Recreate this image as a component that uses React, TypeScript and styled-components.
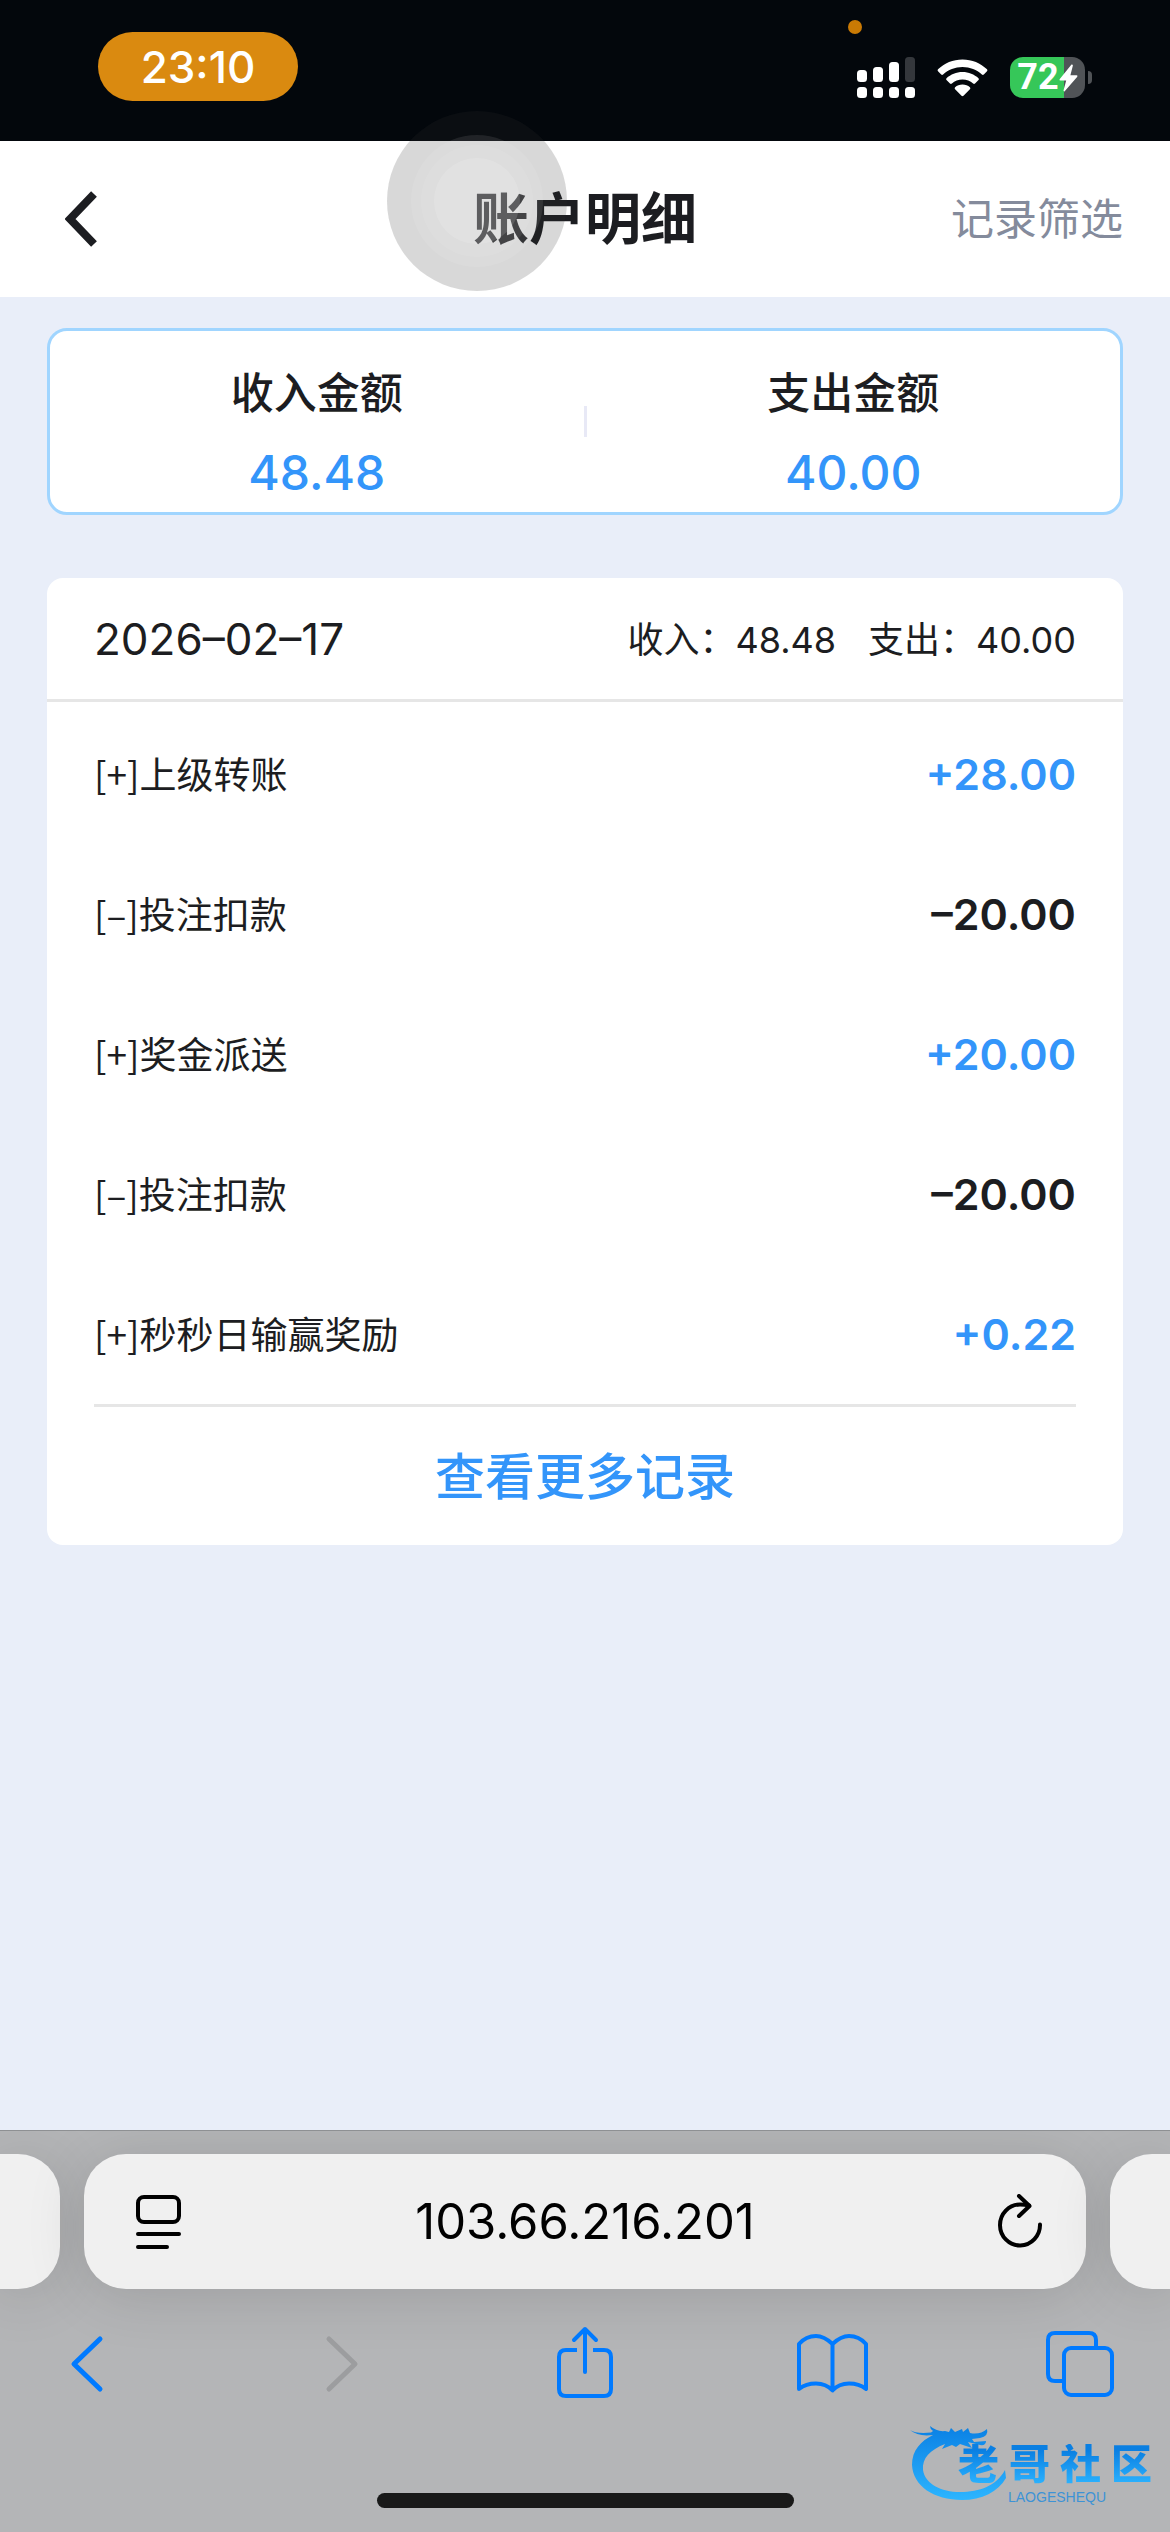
import React from "react";
import styled, { createGlobalStyle } from "styled-components";

const color = {
  ink: "#1c1d21",
  blue: "#3395fa",
  iosBlue: "#007aff",
  page: "#e9eef9",
  line: "#e6e6e6",
  chrome: "#b4b5b7",
};

const GlobalStyle = createGlobalStyle`
  * { box-sizing: border-box; }
  body { margin: 0; background: ${color.page}; }
  h1, dl, dd, ul, p { margin: 0; padding: 0; }
  ul { list-style: none; }
  button, input {
    margin: 0; padding: 0; border: 0; background: none;
    font: inherit; color: inherit;
  }
  svg { display: block; }
`;

const Screen = styled.div`
  position: relative;
  display: flex;
  flex-direction: column;
  min-height: 100vh;
  overflow: hidden;
  background: ${color.page};
  color: ${color.ink};
  font-family: Inter, "Noto Sans CJK SC", sans-serif;
`;

const StatusBar = styled.div`
  position: relative;
  display: flex;
  align-items: flex-start;
  justify-content: space-between;
  height: 141px;
  padding: 32px 78px 0 98px;
  background: #03070c;
`;

const TimePill = styled.time`
  display: flex;
  align-items: center;
  justify-content: center;
  width: 200px;
  height: 69px;
  border-radius: 35px;
  background: #da8a10;
  color: #fff;
  font-size: 44px;
  font-weight: 500;
`;

const StatusIcons = styled.div`
  display: flex;
  align-items: center;
  gap: 22px;
  padding-top: 25px;
`;

const MicDot = styled.span`
  position: absolute;
  top: 20px;
  right: 308px;
  width: 14px;
  height: 14px;
  border-radius: 50%;
  background: #ca7a04;
`;

const BatteryGroup = styled.div`
  display: flex;
  align-items: center;
  gap: 3px;
`;

const BatteryBody = styled.div`
  display: flex;
  align-items: center;
  justify-content: center;
  width: 75px;
  height: 41px;
  border-radius: 13px;
  background: linear-gradient(90deg, #36c759 72%, #505357 72%);
  color: #fff;
  font-family: Roboto, sans-serif;
  font-size: 36px;
  font-weight: 700;
  line-height: 41px;
`;

const BatteryCap = styled.span`
  width: 4px;
  height: 13px;
  border-radius: 0 4px 4px 0;
  background: #505357;
`;

const Header = styled.header`
  display: grid;
  grid-template-columns: 1fr auto 1fr;
  align-items: center;
  height: 156px;
  padding: 0 47px;
  background: #fff;
`;

const BackButton = styled.button`
  justify-self: start;
  padding: 12px 18px;
`;

const Title = styled.h1`
  font-size: 56px;
  font-weight: 700;
  line-height: 80px;
`;

const FilterButton = styled.button`
  justify-self: end;
  color: #848b9c;
  font-size: 43px;
  line-height: 64px;
`;

const Content = styled.main`
  display: flex;
  flex: 1;
  flex-direction: column;
  gap: 63px;
  padding: 31px 47px;
`;

const Summary = styled.dl`
  display: flex;
  align-items: center;
  border: 3px solid #a0d5ff;
  border-radius: 20px;
  background: #fff;
`;

const SummaryItem = styled.div`
  display: flex;
  flex: 1;
  flex-direction: column;
  align-items: center;
  gap: 20px;
  padding: 32px 0 9px;
  line-height: 60px;
`;

const SummaryLabel = styled.dt`
  font-size: 43px;
  font-weight: 500;
`;

const SummaryValue = styled.dd`
  color: ${color.blue};
  font-size: 48px;
  font-weight: 500;
`;

const SummaryDivider = styled.div`
  width: 3px;
  height: 31px;
  background: #e8e9f6;
`;

const Card = styled.section`
  border-radius: 16px;
  background: #fff;
`;

const DayHeader = styled.div`
  display: flex;
  align-items: center;
  justify-content: space-between;
  height: 124px;
  padding: 0 47px;
  border-bottom: 3px solid ${color.line};
`;

const DayDate = styled.time`
  font-size: 44px;
`;

const DayTotals = styled.div`
  display: flex;
  gap: 32px;
  padding-bottom: 4px;
  font-size: 36px;
`;

const RecordList = styled.ul`
  margin: 0 47px;
  padding-top: 2px;
  border-bottom: 3px solid ${color.line};
`;

const Record = styled.li`
  display: flex;
  align-items: center;
  justify-content: space-between;
  height: 140px;
`;

const RecordName = styled.span`
  padding-bottom: 2px;
  font-family: "Noto Sans CJK SC", sans-serif;
  font-size: 37px;
`;

const Amount = styled.span<{ $income: boolean }>`
  color: ${(p) => (p.$income ? color.blue : color.ink)};
  font-size: 43px;
  font-weight: 600;
`;

const MoreButton = styled.button`
  display: block;
  width: 100%;
  height: 138px;
  padding-bottom: 6px;
  color: ${color.blue};
  font-size: 50px;
  font-weight: 500;
`;

const BrowserBar = styled.footer`
  position: relative;
  border-top: 1px solid #8e9093;
  background: ${color.chrome};
  overflow: hidden;
`;

const AddressStrip = styled.div`
  display: flex;
  gap: 24px;
  padding-top: 23px;
`;

const pill = `
  height: 135px;
  background: #f0f0f0;
  box-shadow: 0 6px 60px rgba(0, 0, 0, 0.13);
`;

const SideTab = styled.div<{ $side: "left" | "right" }>`
  ${pill}
  flex: none;
  width: 60px;
  border-radius: ${(p) => (p.$side === "left" ? "0 42px 42px 0" : "42px 0 0 42px")};
`;

const AddressBar = styled.div`
  ${pill}
  display: flex;
  flex: 1;
  align-items: center;
  min-width: 0;
  border-radius: 42px;
  color: #000;
`;

const AddressButton = styled.button`
  display: flex;
  flex: none;
  justify-content: center;
  width: 140px;
`;

const AddressInput = styled.input`
  flex: 1;
  min-width: 0;
  height: 80px;
  outline: none;
  font-size: 49px;
  text-align: center;
`;

const Toolbar = styled.nav`
  display: flex;
  justify-content: space-between;
  padding: 32px 50px 0 46px;
  color: ${color.iosBlue};
`;

const ToolButton = styled.button`
  width: 80px;
  height: 84px;

  &:disabled {
    color: #9c9d9f;
  }
`;

const HomeIndicator = styled.div`
  width: 417px;
  height: 15px;
  margin: 88px auto 24px;
  border-radius: 8px;
  background: #191919;
`;

const TouchButton = styled.button`
  position: absolute;
  top: 111px;
  left: calc(50% - 198px);
  width: 180px;
  height: 180px;
`;

const Watermark = styled.div`
  position: absolute;
  right: 18px;
  bottom: 24px;
  width: 244px;
  height: 86px;
`;

const WatermarkRing = styled.svg`
  position: absolute;
  inset: 0;
`;

const WatermarkText = styled.div`
  position: absolute;
  top: 22px;
  right: 0;
  display: flex;
  gap: 10px;
  background: linear-gradient(#0a7fe2 15%, #2bb2fe 95%);
  background-clip: text;
  color: transparent;
  font-family: "Liberation Sans", "Noto Sans CJK SC", sans-serif;
  font-size: 41px;
  font-weight: 900;
  line-height: 42px;
`;

const WatermarkSub = styled.div`
  position: absolute;
  top: 68px;
  left: 100px;
  color: #3d93d6;
  font-family: "Liberation Sans", sans-serif;
  font-size: 14px;
  line-height: 14px;
`;

function SignalIcon() {
  return (
    <svg width="58" height="41" viewBox="0 0 58 41" fill="#fff" aria-hidden="true">
      <rect x="0" y="13" width="10" height="12" rx="3.5" />
      <rect x="16" y="10" width="10" height="15" rx="3.5" />
      <rect x="32" y="5" width="10" height="20" rx="3.5" />
      <rect x="48" y="0" width="10" height="25" rx="3.5" fill="#34373c" />
      {[0, 16, 32, 48].map((x) => (
        <rect key={x} x={x} y="30" width="10" height="11" rx="3.5" />
      ))}
    </svg>
  );
}

function WifiIcon() {
  return (
    <svg width="51" height="38" viewBox="0 0 51 38" fill="#fff" aria-hidden="true">
      <path d="M25.5 0.5C35 .5 43.6 4.2 50 10.300Q50.900 11.200 50 12.200L46.800 15.500Q45.900 16.400 44.900 15.500C39.800 10.800 33 8 25.500 8S11.200 10.800 6.100 15.500Q5.100 16.400 4.200 15.500L1 12.200Q.1 11.200 1 10.300C7.400 4.200 16 .5 25.500 .5Z" />
      <path d="M25.5 13C31.700 13 37.300 15.400 41.500 19.200Q42.400 20.100 41.500 21L38 24.500Q37.100 25.400 36.100 24.500C33.300 22 29.600 20.500 25.500 20.500S17.700 22 14.900 24.500Q13.900 25.400 13 24.500L9.500 21Q8.600 20.100 9.500 19.200C13.700 15.400 19.300 13 25.500 13Z" />
      <path d="M25.500 25.500C28.400 25.500 31 26.500 32.900 28.200Q33.900 29.200 32.900 30.200L26.500 36.800Q25.500 37.600 24.500 36.800L18.100 30.200Q17.100 29.200 18.100 28.200C20 26.500 22.600 25.500 25.500 25.500Z" />
    </svg>
  );
}

function BoltIcon() {
  return (
    <svg width="19" height="28" viewBox="0 0 19 28" fill="#fff" aria-hidden="true">
      <path d="M12.500.500 .6 15.200Q0 16.500 1.400 16.500H7.200L4.500 26.600Q4.700 27.800 5.700 27.200L18.300 12.700Q18.800 11.300 17.500 11.300H11.400L13.900 1.400Q13.700.1 12.500.500Z" />
    </svg>
  );
}

type LineIconProps = {
  width: number;
  height: number;
  box?: string;
  stroke?: number;
  children: React.ReactNode;
};

function LineIcon({ width, height, box, stroke = 4, children }: LineIconProps) {
  return (
    <svg
      width={width}
      height={height}
      viewBox={box ?? `0 0 ${width} ${height}`}
      fill="none"
      stroke="currentColor"
      strokeWidth={stroke}
      strokeLinecap="round"
      strokeLinejoin="round"
      aria-hidden="true"
    >
      {children}
    </svg>
  );
}

const summary = [
  { label: "收入金额", value: "48.48" },
  { label: "支出金额", value: "40.00" },
];

const records = [
  { name: "[+]上级转账", amount: "+28.00" },
  { name: "[–]投注扣款", amount: "–20.00" },
  { name: "[+]奖金派送", amount: "+20.00" },
  { name: "[–]投注扣款", amount: "–20.00" },
  { name: "[+]秒秒日输赢奖励", amount: "+0.22" },
];

export default function App() {
  return (
    <Screen lang="zh-CN">
      <GlobalStyle />

      <StatusBar>
        <TimePill>23:10</TimePill>
        <MicDot />
        <StatusIcons>
          <SignalIcon />
          <WifiIcon />
          <BatteryGroup>
            <BatteryBody>
              72
              <BoltIcon />
            </BatteryBody>
            <BatteryCap />
          </BatteryGroup>
        </StatusIcons>
      </StatusBar>

      <Header>
        <BackButton aria-label="返回">
          <svg width="32" height="56" viewBox="0 0 32 56" fill="none" stroke={color.ink} strokeWidth="8" aria-hidden="true">
            <path d="M29 3 5 28 29 53" />
          </svg>
        </BackButton>
        <Title>账户明细</Title>
        <FilterButton>记录筛选</FilterButton>
      </Header>

      <Content>
        <Summary>
          <SummaryItem>
            <SummaryLabel>{summary[0].label}</SummaryLabel>
            <SummaryValue>{summary[0].value}</SummaryValue>
          </SummaryItem>
          <SummaryDivider />
          <SummaryItem>
            <SummaryLabel>{summary[1].label}</SummaryLabel>
            <SummaryValue>{summary[1].value}</SummaryValue>
          </SummaryItem>
        </Summary>

        <Card>
          <DayHeader>
            <DayDate dateTime="2026-02-17">2026–02–17</DayDate>
            <DayTotals>
              <span>收入：48.48</span>
              <span>支出：40.00</span>
            </DayTotals>
          </DayHeader>
          <RecordList>
            {records.map((r, i) => (
              <Record key={i}>
                <RecordName>{r.name}</RecordName>
                <Amount $income={r.amount.startsWith("+")}>{r.amount}</Amount>
              </Record>
            ))}
          </RecordList>
          <MoreButton>查看更多记录</MoreButton>
        </Card>
      </Content>

      <BrowserBar>
        <AddressStrip>
          <SideTab $side="left" />
          <AddressBar>
            <AddressButton aria-label="页面菜单">
              <LineIcon width={56} height={56} box="-10 0 56 56">
                <rect x="2" y="3" width="41" height="25" rx="6" />
                <path d="M2 40H43M2 53H31" />
              </LineIcon>
            </AddressButton>
            <AddressInput aria-label="网址" defaultValue="103.66.216.201" />
            <AddressButton aria-label="重新载入">
              <LineIcon width={56} height={56} box="-10 3 56 56">
                <path d="M42 33.500A20 20.500 0 1 1 22 13.500Q27 13.500 31 14.500" />
                <path d="M21 5 31.500 15 21 25" />
              </LineIcon>
            </AddressButton>
          </AddressBar>
          <SideTab $side="right" />
        </AddressStrip>

        <Toolbar>
          <ToolButton aria-label="后退">
            <LineIcon width={80} height={84} stroke={5}>
              <path d="M54 18 28 43 54 68" />
            </LineIcon>
          </ToolButton>
          <ToolButton aria-label="前进" disabled>
            <LineIcon width={80} height={84} stroke={5}>
              <path d="M34 18 60 43 34 68" />
            </LineIcon>
          </ToolButton>
          <ToolButton aria-label="分享">
            <LineIcon width={80} height={84}>
              <path d="M34 29H23Q16 29 16 36V68Q16 75 23 75H61Q68 75 68 68V36Q68 29 61 29H50" strokeLinecap="butt" />
              <path d="M42 51V8M31 19 42 8 53 19" />
            </LineIcon>
          </ToolButton>
          <ToolButton aria-label="书签">
            <LineIcon width={80} height={84}>
              <path d="M40.500 23Q32 15 24 15 14 15 7 23V68Q14 62.500 24 62.500 34 62.500 40.500 69.500 47 62.500 57 62.500 67 62.500 74 68V23Q67 15 57 15 49 15 40.500 23V69" />
            </LineIcon>
          </ToolButton>
          <ToolButton aria-label="标签页">
            <LineIcon width={80} height={84}>
              <rect x="24" y="27" width="48" height="47" rx="7" />
              <path d="M24 60H15Q8 60 8 53V19Q8 12 15 12H49Q56 12 56 19V27" strokeLinecap="butt" />
            </LineIcon>
          </ToolButton>
        </Toolbar>

        <HomeIndicator />

        <Watermark>
          <WatermarkRing width="244" height="86" viewBox="0 0 244 86" aria-hidden="true">
            <defs>
              <linearGradient id="ring" x1="0" y1="0" x2="0" y2="1">
                <stop offset="0" stopColor="#0a80e4" />
                <stop offset="1" stopColor="#2db5ff" />
              </linearGradient>
            </defs>
            <path
              fill="url(#ring)"
              d="M2 8Q8 12 23 10.500L25 9Q22 7 22 4Q29 10 37 9L41 10 43 6 47 10 54 7 55 10 60 6 62 11Q72 13 79 7Q81 14 72 16L64 17 66 20 78 19Q78 24 72 23L60 20 64 26 52 22 48 25 44 23 34 27 37 22C22 28 14 36 15 48C17 62 33 70 52 70C72 70 88 64 97 48L98 56C90 70 74 78 54 78C26 78 5 64 4 43C4 28 13 19 25 13Q10 15 2 8Z"
            />
          </WatermarkRing>
          <WatermarkText>
            <span>老</span>
            <span>哥</span>
            <span>社</span>
            <span>区</span>
          </WatermarkText>
          <WatermarkSub>LAOGESHEQU</WatermarkSub>
        </Watermark>
      </BrowserBar>

      <TouchButton aria-label="辅助触控">
        <svg width="180" height="180" viewBox="0 0 180 180" aria-hidden="true">
          <circle cx="90" cy="90" r="90" fill="#2f2f2f" fillOpacity=".19" />
          <circle cx="90" cy="90" r="66" fill="#fff" fillOpacity=".09" />
          <circle cx="90" cy="90" r="56" fill="#fff" fillOpacity=".08" />
          <circle cx="90" cy="90" r="43" fill="#fff" fillOpacity=".14" />
        </svg>
      </TouchButton>
    </Screen>
  );
}
